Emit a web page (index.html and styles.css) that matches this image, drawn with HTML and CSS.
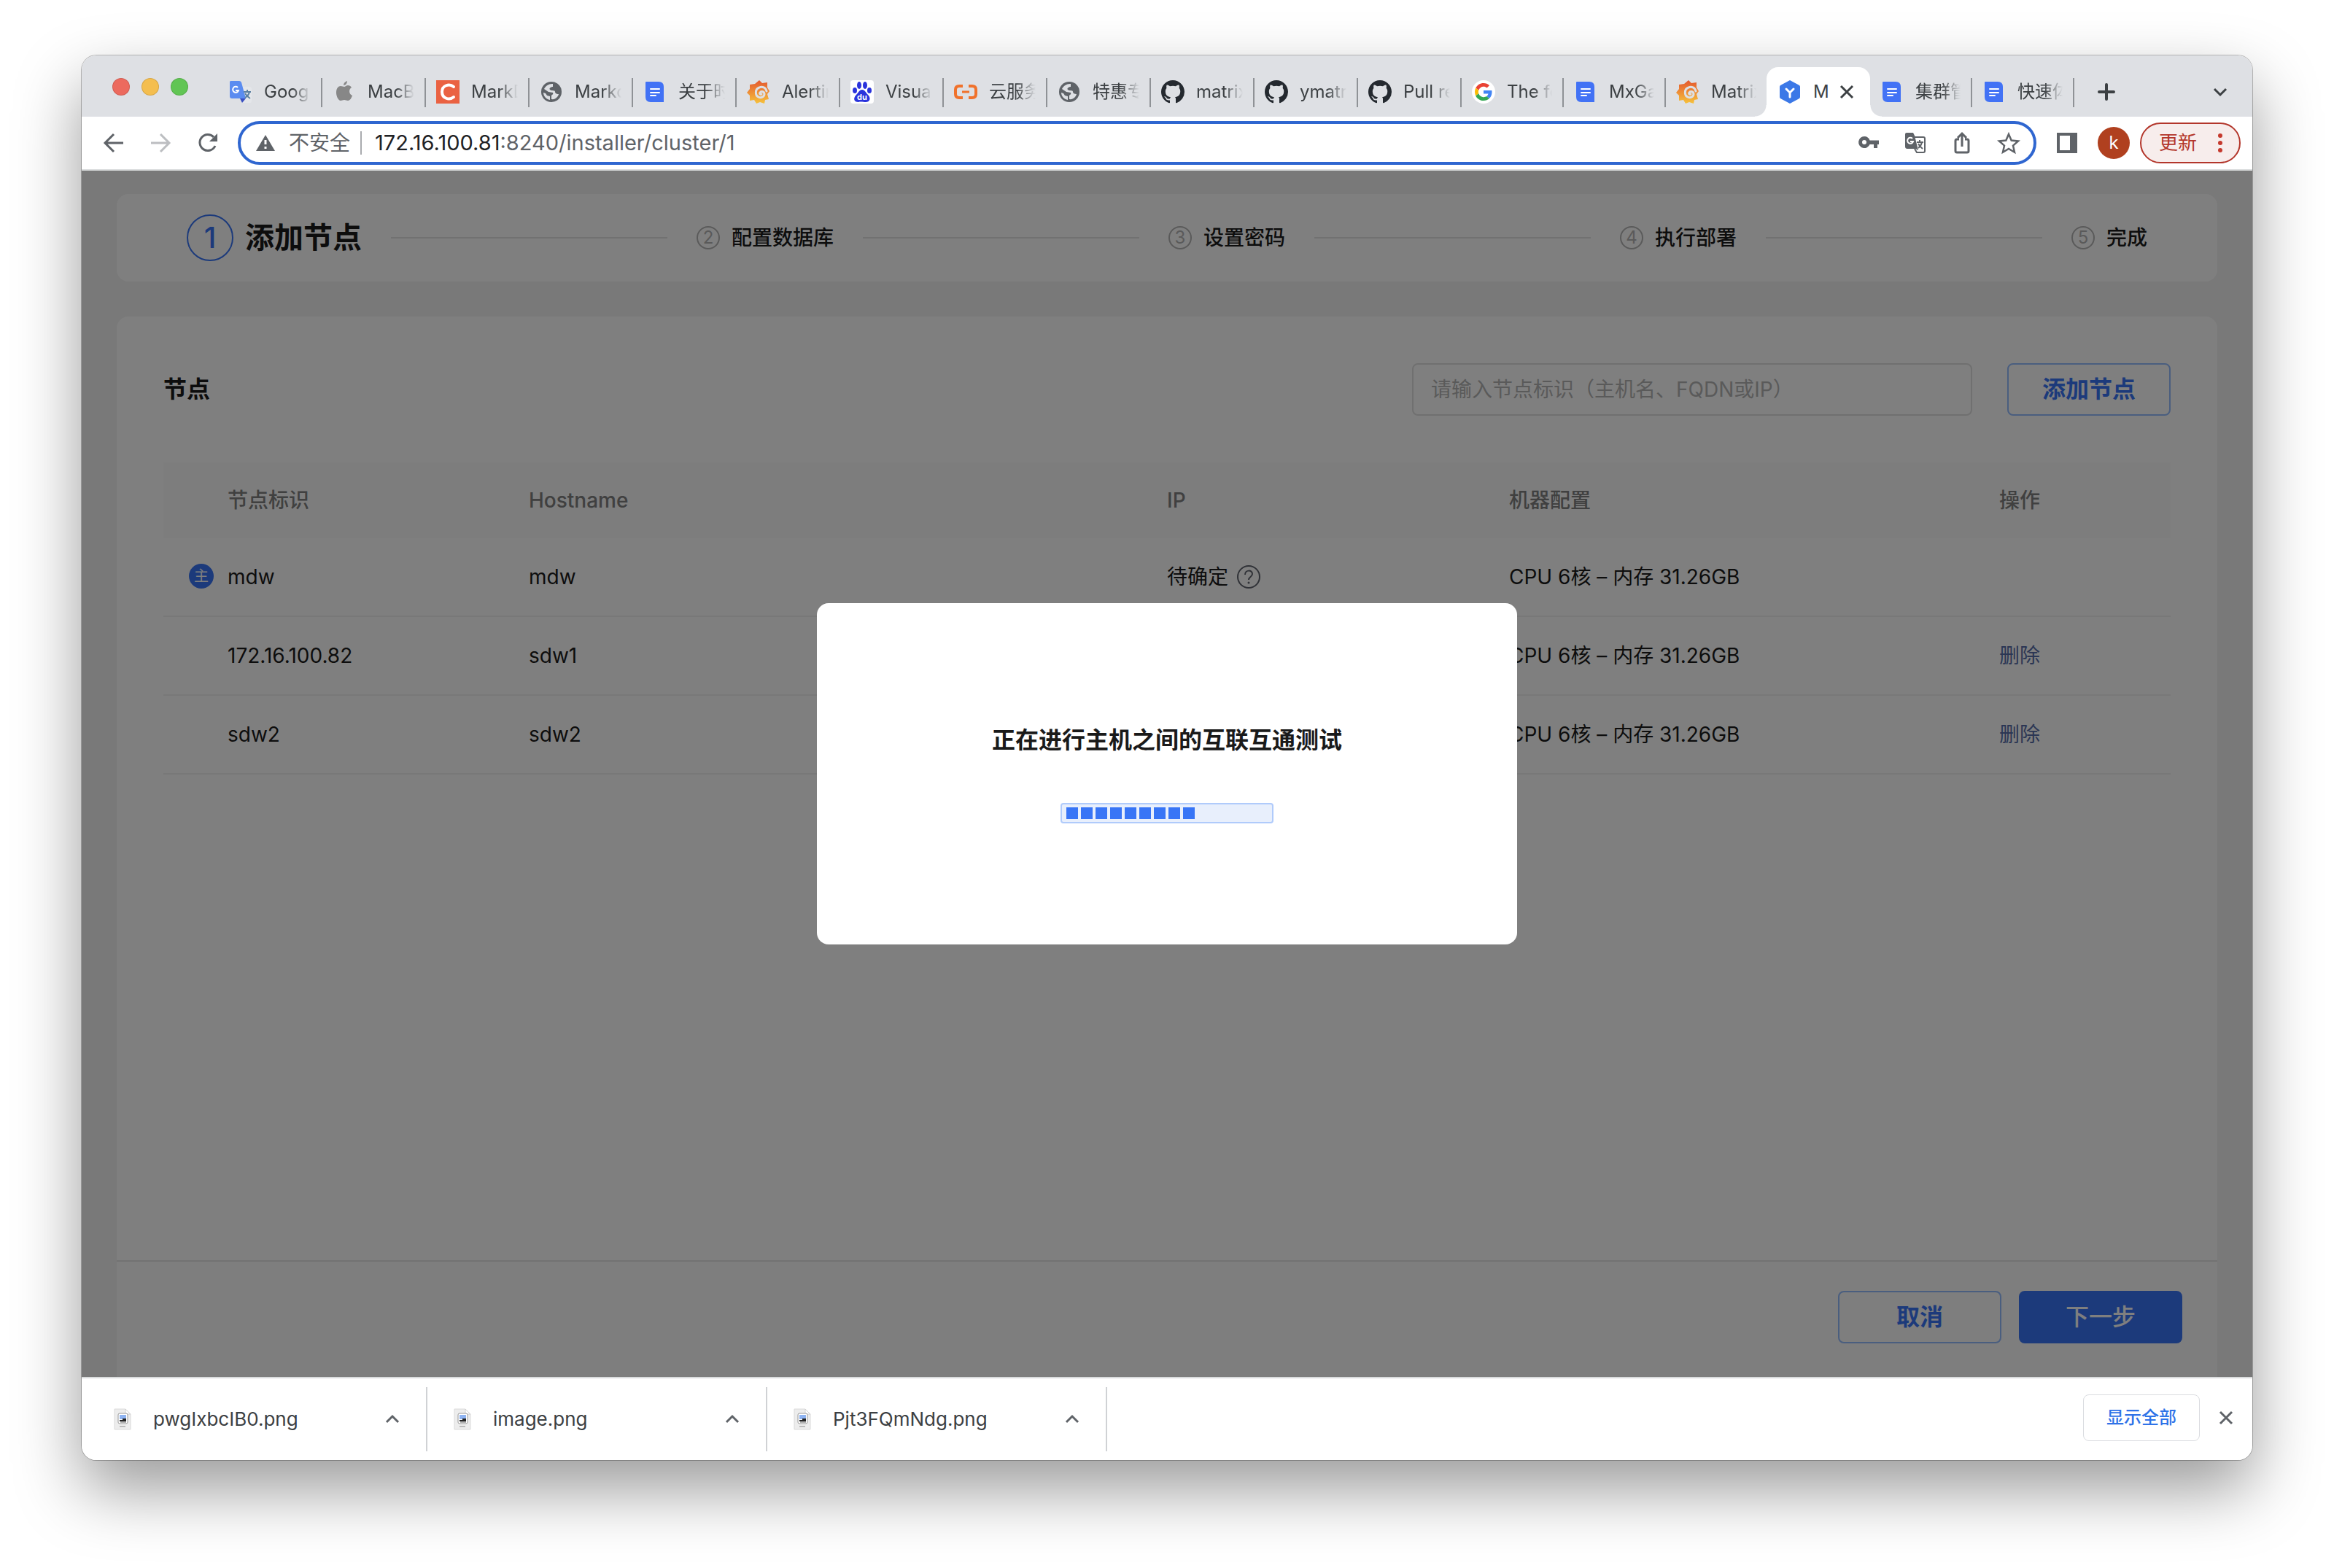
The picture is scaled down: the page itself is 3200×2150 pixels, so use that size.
FILE: index.html
```html
<!DOCTYPE html>
<html lang="zh-CN">
<head>
<meta charset="utf-8">
<title>添加节点</title>
<link rel="stylesheet" href="styles.css">
</head>
<body>
<svg class="sprite" aria-hidden="true">
  <defs>
    <linearGradient id="flame" x1="0" y1="0" x2="0" y2="1">
      <stop offset="0" stop-color="#e4572f"/><stop offset="1" stop-color="#f6c23c"/>
    </linearGradient>
  </defs>
  <symbol id="i-docs" viewBox="0 0 32 32">
    <path fill="#4272f5" d="M5 2h17q7 0 7 7v21H11q-7 0-7-7V3q0-1 1-1z" transform="translate(-1)"/>
    <path stroke="#fff" stroke-width="2" stroke-linecap="round" d="M10 12h12M10 17h12M10 21h7"/>
  </symbol>
  <symbol id="i-globe" viewBox="0 0 32 32">
    <circle cx="16" cy="16" r="14" fill="#5f6368"/>
    <path fill="#dee0e4" d="M17 5c-5 0-9 3-11 7l6 4 6 1c1 2-1 3-2 4v5c5 1 9-3 10-7-3 0-5-1-5-3 0-3-5-1-7-3s2-4 4-4V5zM5 17c0 5 4 9 9 10v-5l-4-1-2-3z"/>
  </symbol>
  <symbol id="i-grafana" viewBox="0 0 32 32">
    <path fill="url(#flame)" d="M17 0l4 4 7-1 0 7 3 5-3 4 2 7-5 1-1 5-6-2-5 2-3-5-6 1 0-7-4-4 4-5 0-6 7-1z"/>
    <path fill="none" stroke="#dee0e4" stroke-width="3" stroke-linecap="round" d="M27 15c-1-5-6-7-10-5-6 2-6 11-1 13 4 2 8-1 8-4s-4-5-6-2c-1 2 1 3 2 2"/>
  </symbol>
  <symbol id="i-github" viewBox="0 0 16 16">
    <path fill="#24292f" d="M8 0C3.58 0 0 3.58 0 8c0 3.54 2.29 6.53 5.47 7.59.4.07.55-.17.55-.38 0-.19-.01-.82-.01-1.49-2.01.37-2.53-.49-2.69-.94-.09-.23-.48-.94-.82-1.13-.28-.15-.68-.52-.01-.53.63-.01 1.08.58 1.23.82.72 1.21 1.87.87 2.33.66.07-.52.28-.87.51-1.07-1.78-.2-3.64-.89-3.64-3.95 0-.87.31-1.59.82-2.15-.08-.2-.36-1.02.08-2.12 0 0 .67-.21 2.2.82.64-.18 1.32-.27 2-.27s1.36.09 2 .27c1.53-1.04 2.2-.82 2.2-.82.44 1.1.16 1.92.08 2.12.51.56.82 1.27.82 2.15 0 3.07-1.87 3.75-3.65 3.95.29.25.54.73.54 1.48 0 1.07-.01 1.93-.01 2.2 0 .21.15.46.55.38A8.01 8.01 0 0 0 16 8c0-4.42-3.58-8-8-8z"/>
  </symbol>
  <symbol id="i-png" viewBox="0 0 24 30">
    <path fill="#ededed" stroke="#dadada" d="M1 1h15l7 7v21H1z"/>
    <path fill="#fff" stroke="#cfcfcf" d="M16 1v7h7z"/>
    <rect x="6" y="7" width="13" height="14" rx="2" fill="#fff" stroke="#999"/>
    <path fill="#8fb4f2" d="M8 9h9v6H8z"/><path fill="#222" d="M8 16h4v-2h5v4H8z"/>
    <path stroke="#666" d="M9 19h8"/><path stroke="#bbb" stroke-width="2" d="M8 25h8"/>
  </symbol>
  <symbol id="i-up" viewBox="0 0 20 20">
    <path fill="none" stroke="#5f6368" stroke-width="3" d="M2 14l8-8 8 8"/>
  </symbol>
</svg>

<div class="window">
  <header class="tabstrip">
    <div class="lights"><span class="light light--red"></span><span class="light light--yellow"></span><span class="light light--green"></span></div>
    <nav class="tabs" aria-label="标签页">
      <button class="tab"><svg class="fav" viewBox="0 0 32 32"><path fill="#e4e6ea" d="M14 9h14q3 0 3 3v17q0 2-2 2H18z"/><path fill="#3a4fc0" d="M15 25h8l-5 6z"/><path fill="#5b8cf0" d="M2 1h12q2 0 3 2l6 22H4q-3 0-3-3V2z"/><path fill="none" stroke="#fff" stroke-width="2" d="M12 10a4 4 0 1 0 1 4h-4"/><path fill="none" stroke="#5a7fa0" stroke-width="2" d="M20 16h10M25 13v3M28 16q-1 5-6 8M22 18q2 4 7 7"/></svg><span class="tab__text">Goog</span></button>
      <button class="tab"><svg class="fav" viewBox="0 0 32 32"><path fill="#878787" d="M20 1c0 3-2 6-5 6 0-3 2-5 5-6zM16 9c1 0 3-2 5-2 2 0 4 1 5 3-4 2-4 9 1 11-1 3-3 7-6 7-2 0-3-1-5-1s-3 1-5 1c-3 0-6-6-6-11 0-6 3-9 6-9 2 0 4 1 5 1z"/></svg><span class="tab__text">MacB</span></button>
      <button class="tab"><svg class="fav" viewBox="0 0 32 32"><path fill="#ea6242" d="M0 0h32v32H0z"/><path fill="none" stroke="#fff" stroke-width="4" stroke-linecap="round" d="M24 9c-6-5-16-2-16 7s10 12 16 7"/></svg><span class="tab__text">MarkD</span></button>
      <button class="tab"><svg class="fav"><use href="#i-globe"/></svg><span class="tab__text">Markd</span></button>
      <button class="tab"><svg class="fav"><use href="#i-docs"/></svg><span class="tab__text">关于时</span></button>
      <button class="tab"><svg class="fav"><use href="#i-grafana"/></svg><span class="tab__text">Alertin</span></button>
      <button class="tab"><svg class="fav" viewBox="0 0 32 32"><rect width="32" height="32" rx="4" fill="#fff"/><g fill="#2a33dc"><ellipse cx="12" cy="7" rx="3" ry="5"/><ellipse cx="20" cy="7" rx="3" ry="5"/><ellipse cx="6" cy="14" rx="3" ry="4"/><ellipse cx="26" cy="14" rx="3" ry="4"/><path d="M16 13c4 0 5 4 8 7 5 5 2 10-3 10-3 0-7-1-10 0-6 0-8-5-3-10 3-3 4-7 8-7z"/></g><text x="16" y="27" font-size="11" font-weight="700" fill="#fff" text-anchor="middle">du</text></svg><span class="tab__text">Visua</span></button>
      <button class="tab"><svg class="fav" viewBox="0 0 32 32"><path fill="none" stroke="#f0722c" stroke-width="4" d="M12 8H7q-5 0-5 5v6q0 5 5 5h5M20 8h5q5 0 5 5v6q0 5-5 5h-5"/><path stroke="#f0722c" stroke-width="3" d="M11 16h10"/></svg><span class="tab__text">云服务</span></button>
      <button class="tab"><svg class="fav"><use href="#i-globe"/></svg><span class="tab__text">特惠专</span></button>
      <button class="tab"><svg class="fav"><use href="#i-github"/></svg><span class="tab__text">matrix</span></button>
      <button class="tab"><svg class="fav"><use href="#i-github"/></svg><span class="tab__text">ymatr</span></button>
      <button class="tab"><svg class="fav"><use href="#i-github"/></svg><span class="tab__text">Pull re</span></button>
      <button class="tab tab--narrow"><svg class="fav" viewBox="-8 -8 64 64"><circle cx="24" cy="24" r="32" fill="#fff"/><path fill="#EA4335" d="M24 9.5c3.54 0 6.71 1.22 9.21 3.6l6.85-6.85C35.9 2.38 30.47 0 24 0 14.62 0 6.51 5.38 2.56 13.22l7.98 6.19C12.43 13.72 17.74 9.5 24 9.5z"/><path fill="#4285F4" d="M46.98 24.55c0-1.57-.15-3.09-.38-4.55H24v9.02h12.94c-.58 2.96-2.26 5.48-4.78 7.18l7.73 6c4.51-4.18 7.09-10.36 7.09-17.65z"/><path fill="#FBBC05" d="M10.53 28.59c-.48-1.45-.76-2.99-.76-4.59s.27-3.14.76-4.59l-7.98-6.19C.92 16.46 0 20.12 0 24c0 3.88.92 7.54 2.56 10.78l7.97-6.19z"/><path fill="#34A853" d="M24 48c6.48 0 11.93-2.13 15.89-5.81l-7.73-6c-2.15 1.45-4.92 2.3-8.16 2.3-6.26 0-11.57-4.22-13.47-9.91l-7.98 6.19C6.51 42.62 14.62 48 24 48z"/></svg><span class="tab__text">The fo</span></button>
      <button class="tab tab--narrow"><svg class="fav"><use href="#i-docs"/></svg><span class="tab__text">MxGa</span></button>
      <button class="tab tab--narrow tab--bare"><svg class="fav"><use href="#i-grafana"/></svg><span class="tab__text">Matrix</span></button>
      <button class="tab tab--active"><svg class="fav" viewBox="0 0 32 32"><path fill="#3b78e7" d="M16 0l13 7q1 1 1 2v14q0 1-1 2l-13 7-13-7q-1-1-1-2V9q0-1 1-2z"/><path fill="none" stroke="#fff" stroke-width="3" stroke-linecap="round" d="M11 12l5 5 5-5M16 17v6"/></svg><span class="tab__text">M</span><svg class="tab__close" viewBox="0 0 20 20"><path stroke="#3c4043" stroke-width="3" d="M2 2l16 16M18 2L2 18"/></svg></button>
      <button class="tab tab--narrow"><svg class="fav"><use href="#i-docs"/></svg><span class="tab__text">集群管</span></button>
      <button class="tab tab--narrow"><svg class="fav"><use href="#i-docs"/></svg><span class="tab__text">快速体</span></button>
    </nav>
    <button class="icon-btn newtab" aria-label="新标签页"><svg viewBox="0 0 32 32"><path stroke="#3c4043" stroke-width="4" stroke-linecap="round" d="M16 6v20M6 16h20"/></svg></button>
    <button class="icon-btn tabsearch" aria-label="搜索标签页"><svg viewBox="0 0 32 32"><path fill="none" stroke="#3c4043" stroke-width="3" d="M8 12l8 8 8-8"/></svg></button>
  </header>

  <div class="toolbar">
    <div class="nav-btns">
      <button class="icon-btn" aria-label="后退"><svg viewBox="0 0 32 32"><path fill="none" stroke="#5f6368" stroke-width="3" d="M29 16H5M16 4L4 16l12 12"/></svg></button>
      <button class="icon-btn" aria-label="前进"><svg viewBox="0 0 32 32"><path fill="none" stroke="#bcbec1" stroke-width="3" d="M3 16h24M16 4l12 12-12 12"/></svg></button>
      <button class="icon-btn" aria-label="重新加载"><svg viewBox="0 0 32 32"><path fill="none" stroke="#5f6368" stroke-width="3" d="M27 20a11 11 0 1 1-2-12"/><path fill="#5f6368" d="M30 3v11H19z"/></svg></button>
    </div>
    <div class="omnibox">
      <svg class="warn" viewBox="0 0 28 28"><path fill="#5f6368" d="M14 3l13 22H1z"/><path stroke="#fff" stroke-width="3" d="M14 10v6M14 19v3"/></svg>
      <span class="omnibox__label">不安全</span>
      <span class="omnibox__sep"></span>
      <div class="omnibox__url" role="textbox" aria-label="地址" contenteditable="true" spellcheck="false"><b class="host">172.16.100.81</b>:8240/installer/cluster/1</div>
      <div class="omnibox__icons">
        <button class="icon-btn" aria-label="密码"><svg viewBox="0 0 32 32"><path fill="#5f6368" fill-rule="evenodd" d="M10 7a8 8 0 0 1 7.500 5.500H30V18h-2v5h-5v-5h-5.500A8 8 0 1 1 10 7zM10 12a3 3 0 1 0 0 6 3 3 0 0 0 0-6z"/></svg></button>
        <button class="icon-btn" aria-label="翻译"><svg viewBox="0 0 32 32"><path fill="none" stroke="#5f6368" stroke-width="2" d="M15 8h12q2 0 2 2v17q0 2-2 2H18l-3-5"/><path fill="#5f6368" d="M4 2h9l2 4 5 20-4-2H5q-3 0-3-3V4q0-2 2-2z"/><path fill="none" stroke="#fff" stroke-width="2" d="M12 10a4 4 0 1 0 1 4H9"/><path fill="none" stroke="#5f6368" stroke-width="2" d="M18 15h9M22 12v3M25 15q-1 5-5 8M20 17q2 4 6 7"/></svg></button>
        <button class="icon-btn" aria-label="分享"><svg viewBox="0 0 32 32"><path fill="none" stroke="#5f6368" stroke-width="3" d="M12 11H9q-2 0-2 2v14q0 2 2 2h14q2 0 2-2V13q0-2-2-2h-3M16 21V4M10 9l6-6 6 6"/></svg></button>
        <button class="icon-btn" aria-label="收藏"><svg viewBox="0 0 32 32"><path fill="none" stroke="#5f6368" stroke-width="2.500" d="M16 4l3.700 8.600 9.300.8-7 6.200 2 9.100-8-4.800-8 4.800 2-9.100-7-6.200 9.300-.8z"/></svg></button>
      </div>
    </div>
    <button class="icon-btn panel-btn" aria-label="侧边栏"><svg viewBox="0 0 32 32"><path fill="#5f6368" fill-rule="evenodd" d="M2 2h28v28H2zM6 6v20h14V6z"/></svg></button>
    <button class="avatar">k</button>
    <button class="update">更新<svg class="update__dots" viewBox="0 0 8 28"><g fill="#c5392d"><circle cx="4" cy="4" r="3"/><circle cx="4" cy="14" r="3"/><circle cx="4" cy="24" r="3"/></g></svg></button>
  </div>

  <div class="viewport">
    <div class="page">
      <ol class="steps">
        <li class="step step--current"><span class="step__num">1</span>添加节点</li>
        <li class="step"><span class="step__num">2</span>配置数据库</li>
        <li class="step"><span class="step__num">3</span>设置密码</li>
        <li class="step"><span class="step__num">4</span>执行部署</li>
        <li class="step"><span class="step__num">5</span>完成</li>
      </ol>
      <main class="card">
        <div class="card__head">
          <h1 class="card__title">节点</h1>
          <input class="field" type="text" aria-label="节点标识" placeholder="请输入节点标识（主机名、FQDN或IP）">
          <button class="btn">添加节点</button>
        </div>
        <table class="nodes">
          <colgroup><col class="c-id"><col class="c-host"><col class="c-ip"><col class="c-conf"><col class="c-op"></colgroup>
          <thead><tr><th>节点标识</th><th>Hostname</th><th>IP</th><th>机器配置</th><th>操作</th></tr></thead>
          <tbody>
            <tr><td><span class="master">主</span>mdw</td><td>mdw</td><td><span class="pending">待确定<svg class="help" viewBox="0 0 32 32"><circle cx="16" cy="16" r="15" fill="none" stroke="#60646f" stroke-width="2"/><path fill="none" stroke="#60646f" stroke-width="2" d="M11 13c0-7 10-7 10-1 0 4-5 4-5 8"/><circle cx="16" cy="24" r="1.500" fill="#60646f"/></svg></span></td><td>CPU 6核 – 内存 31.26GB</td><td></td></tr>
            <tr><td>172.16.100.82</td><td>sdw1</td><td></td><td>CPU 6核 – 内存 31.26GB</td><td><a class="link" href="#">删除</a></td></tr>
            <tr><td>sdw2</td><td>sdw2</td><td></td><td>CPU 6核 – 内存 31.26GB</td><td><a class="link" href="#">删除</a></td></tr>
          </tbody>
        </table>
      </main>
      <footer class="actions">
        <button class="btn">取消</button>
        <button class="btn btn--primary">下一步</button>
      </footer>
    </div>
    <div class="mask">
      <section class="dialog" role="dialog" aria-labelledby="dialog-title">
        <h2 class="dialog__title" id="dialog-title">正在进行主机之间的互联互通测试</h2>
        <div class="progress" role="progressbar" aria-labelledby="dialog-title"><i></i><i></i><i></i><i></i><i></i><i></i><i></i><i></i><i></i></div>
      </section>
    </div>
  </div>

  <div class="shelf">
    <button class="download"><svg class="download__icon"><use href="#i-png"/></svg><span class="download__name">pwgIxbcIB0.png</span><svg class="download__more"><use href="#i-up"/></svg></button>
    <button class="download"><svg class="download__icon"><use href="#i-png"/></svg><span class="download__name">image.png</span><svg class="download__more"><use href="#i-up"/></svg></button>
    <button class="download"><svg class="download__icon"><use href="#i-png"/></svg><span class="download__name">Pjt3FQmNdg.png</span><svg class="download__more"><use href="#i-up"/></svg></button>
    <button class="showall">显示全部</button>
    <button class="icon-btn shelf__close" aria-label="关闭"><svg viewBox="0 0 32 32"><path stroke="#5f6368" stroke-width="3" d="M8 8l16 16M24 8L8 24"/></svg></button>
  </div>
</div>
</body>
</html>
```

FILE: styles.css
```css
* { box-sizing: border-box; }

body {
  margin: 0;
  min-height: 100vh;
  padding: 76px 112px 148px;
  display: flex;
  flex-direction: column;
  background: #fff;
  color: #1a1a1a;
  font: 28px/40px Inter, "Noto Sans CJK SC", sans-serif;
}

button {
  margin: 0;
  padding: 0;
  border: 0;
  background: none;
  color: inherit;
  font: inherit;
}

svg { display: block; flex: none; }
.sprite { position: absolute; width: 0; height: 0; }

.window {
  flex: 1;
  display: flex;
  flex-direction: column;
  overflow: hidden;
  border-radius: 20px;
  background: #fff;
  box-shadow: 0 0 0 1px rgba(0, 0, 0, .25), 0 40px 90px rgba(0, 0, 0, .4);
}

.icon-btn { flex: none; width: 32px; height: 32px; }
.icon-btn svg { width: 32px; height: 32px; }

/* Tab strip */
.tabstrip {
  display: flex;
  align-items: center;
  padding: 16px 28px 0 42px;
  background: #dee0e4;
}
.lights { display: flex; gap: 16px; margin: 0 42px 14px 0; }
.light { width: 24px; height: 24px; border-radius: 50%; border: 1px solid rgba(0, 0, 0, .12); }
.light--red { background: #ec6a5e; }
.light--yellow { background: #f4be4f; }
.light--green { background: #61c554; }

.tabs { flex: 0 1 2544px; display: flex; min-width: 0; }
.tab {
  position: relative;
  flex: 0 1 142px;
  min-width: 0;
  height: 68px;
  padding: 0 16px 0 14px;
  display: flex;
  align-items: center;
  gap: 16px;
  color: #3c4043;
  font-size: 24px;
  line-height: 32px;
}
.tab::after {
  content: "";
  position: absolute;
  right: 0;
  top: 15px;
  width: 2px;
  height: 40px;
  background: #8f9296;
}
.tab--narrow { flex-basis: 140px; }
.tab--bare::after { display: none; }
.tab__text {
  flex: 1;
  min-width: 0;
  overflow: hidden;
  white-space: nowrap;
  text-align: left;
  -webkit-mask-image: linear-gradient(to right, #000 60%, transparent);
  mask-image: linear-gradient(to right, #000 60%, transparent);
}
.fav { width: 32px; height: 32px; }
.tab--active {
  margin-left: -2px;
  padding: 0 22px 0 16px;
  border-radius: 16px 16px 0 0;
  background: #fff;
}
.tab--active::before,
.tab--active::after {
  content: "";
  position: absolute;
  top: auto;
  bottom: 0;
  width: 16px;
  height: 16px;
}
.tab--active::before {
  left: -16px;
  background: radial-gradient(circle at 0 0, #dee0e4 15px, #fff 16px);
}
.tab--active::after {
  right: -16px;
  background: radial-gradient(circle at 100% 0, #dee0e4 15px, #fff 16px);
}
.tab--active .tab__text { overflow: visible; -webkit-mask-image: none; mask-image: none; }
.tab__close { width: 20px; height: 20px; }
.newtab { margin-left: 28px; }
.tabsearch { margin-left: auto; }

/* Toolbar */
.toolbar {
  display: flex;
  align-items: center;
  height: 74px;
  padding: 0 16px 0 28px;
  border-bottom: 2px solid #dadcdd;
  background: #fff;
}
.nav-btns { display: flex; gap: 32px; margin-right: 26px; }
.omnibox {
  flex: 1;
  min-width: 0;
  height: 60px;
  padding: 0 18px 0 20px;
  display: flex;
  align-items: center;
  border: 4px solid #2f66d0;
  border-radius: 30px;
  color: #5f6368;
}
.warn { width: 28px; height: 28px; }
.omnibox__label { margin-left: 18px; white-space: nowrap; }
.omnibox__sep { width: 2px; height: 32px; margin: 0 18px 0 14px; background: #a9abae; }
.omnibox__url { flex: 1; font-size: 29px; white-space: nowrap; }
.host { color: #202124; font-weight: 400; }
.omnibox__icons { display: flex; gap: 32px; }
.panel-btn { margin: 0 26px; }
.avatar {
  width: 44px;
  height: 44px;
  border-radius: 50%;
  background: #b0401f;
  color: #fff;
  font-size: 24px;
  line-height: 44px;
}
.update {
  width: 138px;
  height: 56px;
  margin-left: 14px;
  padding: 0 22px 0 24px;
  display: flex;
  align-items: center;
  justify-content: space-between;
  border: 2px solid #b3362b;
  border-radius: 28px;
  background: #f7edec;
  color: #b3362b;
  font-size: 26px;
}
.update__dots { width: 8px; height: 28px; }

/* Installer page */
.viewport { position: relative; flex: 1; display: flex; }
.page {
  flex: 1;
  display: flex;
  flex-direction: column;
  padding: 32px 48px 0;
  background: #f2f2f2;
}
.steps {
  display: flex;
  align-items: center;
  min-height: 120px;
  margin: 0 0 48px;
  padding: 0 96px;
  border-radius: 16px;
  background: #fff;
  list-style: none;
}
.step {
  flex: 1 1 auto;
  display: flex;
  align-items: center;
  font-weight: 500;
  white-space: nowrap;
}
.step:last-child { flex: none; }
.step:not(:last-child)::after {
  content: "";
  flex: 1;
  height: 2px;
  margin: 0 40px;
  background: #e2e2e2;
}
.step__num {
  width: 32px;
  height: 32px;
  margin-right: 16px;
  border: 2px solid #b4b4b4;
  border-radius: 50%;
  color: #b4b4b4;
  font-size: 24px;
  font-weight: 400;
  line-height: 28px;
  text-align: center;
}
.step--current { font-size: 40px; font-weight: 700; }
.step--current .step__num {
  width: 64px;
  height: 64px;
  border-color: #3875f6;
  color: #3875f6;
  font-size: 40px;
  font-weight: 500;
  line-height: 60px;
}

.card {
  flex: 1;
  padding: 64px;
  border-radius: 16px 16px 0 0;
  background: #fff;
}
.card__head { display: flex; align-items: center; gap: 48px; margin-bottom: 64px; }
.card__title { flex: 1; margin: 0; font-size: 32px; font-weight: 700; line-height: 48px; }
.field {
  width: 768px;
  height: 72px;
  padding: 0 24px;
  border: 2px solid #e0e0e0;
  border-radius: 8px;
  background: transparent;
  font: inherit;
}
.field::placeholder { color: #b4b4b4; opacity: 1; }

.btn {
  width: 224px;
  height: 72px;
  border: 2px solid #94bcff;
  border-radius: 8px;
  color: #3875f6;
  font-size: 32px;
  font-weight: 700;
}
.btn--primary { border-color: #3875f6; background: #3875f6; color: #fff; font-weight: 500; }

.nodes {
  width: 100%;
  table-layout: fixed;
  border-collapse: separate;
  border-spacing: 0;
  text-align: left;
}
.c-id { width: 469px; }
.c-host { width: 875px; }
.c-ip { width: 469px; }
.c-op { width: 267px; }
.nodes th {
  height: 104px;
  padding: 0 32px;
  background: #fafafa;
  color: #808080;
  font-weight: 500;
}
.nodes td { height: 108px; padding: 0 32px; border-bottom: 2px solid #f0f0f0; }
.nodes th:first-child, .nodes td:first-child { position: relative; padding-left: 88px; }
.master {
  position: absolute;
  left: 35px;
  top: 35px;
  width: 34px;
  height: 34px;
  border-radius: 50%;
  background: #3875f6;
  color: #fff;
  font-size: 20px;
  line-height: 34px;
  text-align: center;
}
.pending { display: flex; align-items: center; gap: 12px; }
.help { width: 32px; height: 32px; }
.link { color: #566ca8; text-decoration: none; }

.actions {
  display: flex;
  justify-content: flex-end;
  gap: 24px;
  padding: 40px 48px 46px;
  border-top: 2px solid #e4e4e4;
  background: #fcfcfc;
}

/* Connectivity test dialog */
.mask {
  position: absolute;
  inset: 0;
  display: flex;
  align-items: center;
  justify-content: center;
  background: rgba(0, 0, 0, .5);
}
.dialog {
  width: 960px;
  padding: 164px 48px 166px;
  display: flex;
  flex-direction: column;
  align-items: center;
  gap: 62px;
  border-radius: 16px;
  background: #fff;
}
.dialog__title { margin: 0; font-size: 32px; font-weight: 700; line-height: 48px; }
.progress {
  display: flex;
  gap: 4px;
  width: 292px;
  height: 28px;
  padding: 4px 6px;
  border: 2px solid #b0cbfb;
  border-radius: 4px;
  background: #e8effc;
}
.progress i { width: 16px; height: 16px; background: #3875f6; }

/* Download shelf */
.shelf {
  display: flex;
  align-items: center;
  height: 114px;
  padding: 0 20px 0 8px;
  border-top: 2px solid #dadcdd;
  background: #fff;
}
.download {
  flex: 0 1 466px;
  height: 88px;
  padding: 0 36px;
  display: flex;
  align-items: center;
  border-right: 2px solid #d0d2d5;
  color: #3c4043;
  font-size: 26px;
}
.download__icon { width: 24px; height: 30px; }
.download__name { flex: 1; margin-left: 30px; text-align: left; }
.download__more { width: 20px; height: 20px; }
.showall {
  width: 160px;
  height: 64px;
  margin: 0 20px 4px auto;
  border: 1px solid #dadce0;
  border-radius: 8px;
  color: #2f73e8;
  font-size: 24px;
  font-weight: 500;
}
.shelf__close { margin-bottom: 4px; }
```
